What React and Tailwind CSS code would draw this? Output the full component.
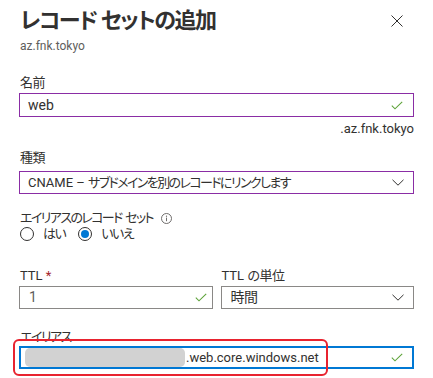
const font = "font-['Roboto','Noto_Sans_CJK_JP',sans-serif] [font-feature-settings:'palt']";

function Check() {
  return (
    <svg width="12" height="9" viewBox="0 0 12 9" className="shrink-0">
      <polyline points="0.8,4.6 4,7.8 11.2,0.8" fill="none" stroke="#5ea33a" strokeWidth="1.1" />
    </svg>
  );
}

function Chevron() {
  return (
    <svg width="12" height="7" viewBox="0 0 12 7" className="shrink-0">
      <polyline points="0.5,0.8 6,6.2 11.5,0.8" fill="none" stroke="#323130" strokeWidth="1" />
    </svg>
  );
}

function Radio({ checked, label }) {
  return (
    <label className="flex items-center gap-[9px] h-[16px]">
      <span className="w-[14px] h-[14px] rounded-full border border-[#323130] flex items-center justify-center">
        {checked && <span className="w-[8px] h-[8px] rounded-full bg-[#0078d4]" />}
      </span>
      <span className="tracking-[-1.5px] leading-[16px]">{label}</span>
    </label>
  );
}

export default function App() {
  return (
    <div className={`${font} relative w-[433px] h-[378px] overflow-hidden bg-white text-[#323130] text-[13px] px-[19px]`}>
      {/* header */}
      <div className="flex items-start justify-between mt-[6px]">
        <h1 className="text-[22px] leading-[30px] font-semibold pl-[1px] tracking-[-1.5px]">レコード セットの追加</h1>
        <svg width="12" height="12" viewBox="0 0 12 12" className="mt-[9px] mr-[11px]">
          <path d="M0.5 0.5 L11.5 11.5 M11.5 0.5 L0.5 11.5" stroke="#323130" strokeWidth="1" />
        </svg>
      </div>
      <div className="text-[12px] leading-[16px] mt-[2px] pl-[1px] text-[#605e5c]">az.fnk.tokyo</div>

      {/* name */}
      <div className="mt-[21px] leading-[16px] pl-[1px] tracking-[-0.5px]">名前</div>
      <div className="mt-[2px] h-[24px] border border-[#8a2da5] flex items-center justify-between pl-[8px] pr-[10px]">
        <span className="text-[14px]">web</span>
        <Check />
      </div>
      <div className="mt-[4px] leading-[16px] text-right">.az.fnk.tokyo</div>

      {/* type */}
      <div className="mt-[13px] leading-[16px] pl-[1px] tracking-[-0.5px]">種類</div>
      <div className="mt-[5px] h-[23px] border border-[#8a2da5] flex items-center justify-between pl-[8px] pr-[9px]">
        <span>
          CNAME – <span className="tracking-[-1.6px]">サブドメインを別のレコードにリンクします</span>
        </span>
        <Chevron />
      </div>

      {/* alias record set */}
      <div className="mt-[16px] h-[16px] leading-[16px] pl-[1px] flex items-center gap-[8px]">
        <span>
          <span className="tracking-[-1.6px]">エイリアスのレコード</span>{' '}
          <span className="tracking-[-1.6px]">セット</span>
        </span>
        <svg width="11" height="11" viewBox="0 0 11 11">
          <circle cx="5.5" cy="5.5" r="5" fill="none" stroke="#605e5c" strokeWidth="0.9" />
          <circle cx="5.5" cy="3.2" r="0.6" fill="#605e5c" />
          <path d="M5.5 4.6 V8.2" stroke="#605e5c" strokeWidth="0.9" />
        </svg>
      </div>
      <div className="flex items-center gap-[13px] h-[16px] pl-[1px]">
        <Radio label="はい" />
        <Radio checked label="いいえ" />
      </div>

      {/* TTL */}
      <div className="mt-[26px] grid grid-cols-2 gap-x-[8px]">
        <div>
          <div className="leading-[16px] pl-[1px]">
            TTL <span className="text-[#a4262c]">*</span>
          </div>
          <div className="mt-[2px] h-[23px] border border-[#8a8886] flex items-center justify-between pl-[9px] pr-[5px]">
            <span className="text-[14px] text-[#605e5c]">1</span>
            <Check />
          </div>
        </div>
        <div>
          <div className="leading-[16px] pl-[1px]">
            TTL <span className="tracking-[-0.5px]">の単位</span>
          </div>
          <div className="mt-[2px] h-[23px] border border-[#8a8886] flex items-center justify-between pl-[9px] pr-[9px]">
            <span className="text-[14px] tracking-[-0.5px]">時間</span>
            <Chevron />
          </div>
        </div>
      </div>

      {/* alias */}
      <div className="mt-[20px] leading-[16px] pl-[1px] tracking-[-1.5px]">エイリアス</div>
      <div className="mt-[1px] h-[23px] border-2 border-[#0078d4] flex items-center justify-between pl-[4px] pr-[9px]">
        <div className="flex items-center">
          <span className="w-[160px] h-[19px] rounded-[5px] bg-[#d2d2d2]" />
          <span className="text-[13px] ml-[1px]">.web.core.windows.net</span>
        </div>
        <Check />
      </div>

      {/* annotation */}
      <div className="absolute left-[13px] top-[339px] w-[315px] h-[37px] rounded-[6px] border-2 border-[#e8232f]" />
    </div>
  );
}
